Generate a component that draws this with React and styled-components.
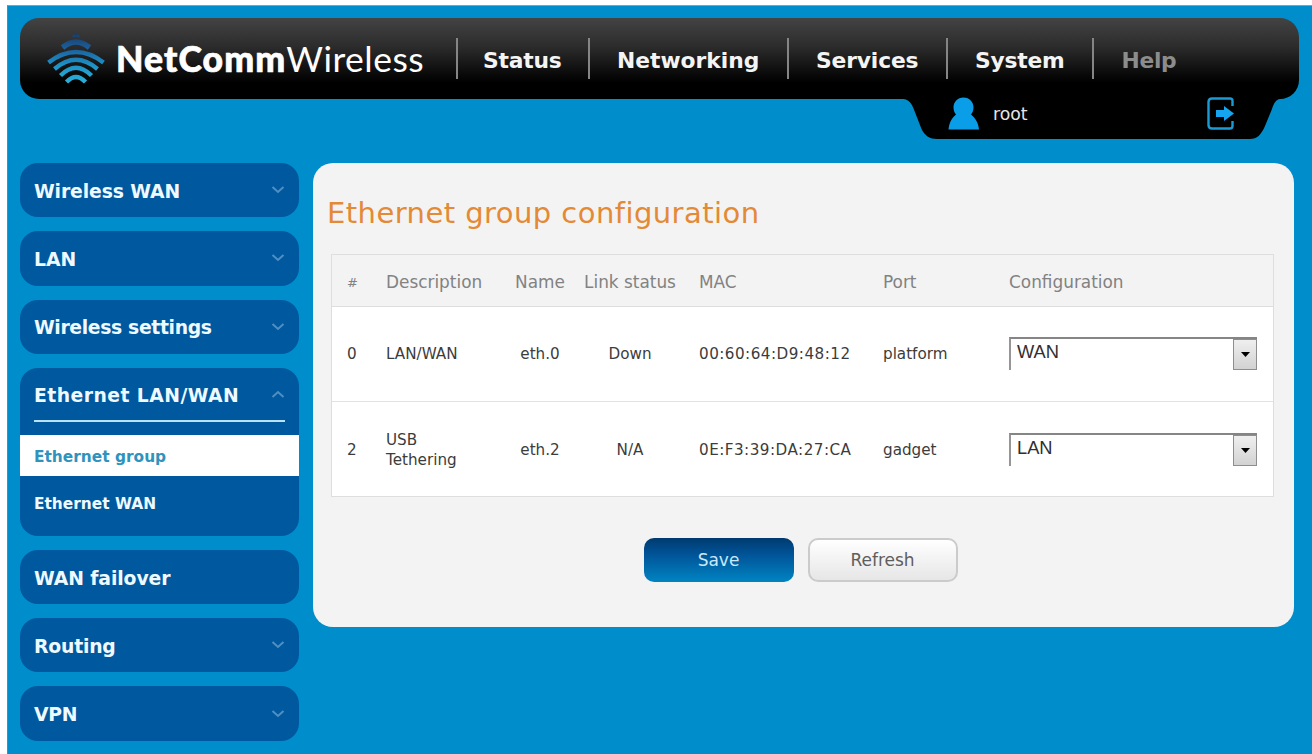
import { useState } from 'react';
import styled, { createGlobalStyle } from 'styled-components';

const navItems = [
   { label: 'Status', width: 132, spacing: -0.2 },
   { label: 'Networking', width: 199, indent: 2 },
   { label: 'Services', width: 159, indent: 2, spacing: -0.15 },
   { label: 'System', width: 146, indent: 2, spacing: -0.2 },
   { label: 'Help', width: 120, indent: 2.5, spacing: -0.3, dim: true },
];

const menuItems = [
   { label: 'Wireless WAN', spacing: -0.1 },
   { label: 'LAN' },
   { label: 'Wireless settings', spacing: -0.35 },
   {
      label: 'Ethernet LAN/WAN',
      spacing: 0.45,
      children: [
         { label: 'Ethernet group', active: true },
         { label: 'Ethernet WAN' },
      ],
   },
   { label: 'WAN failover', leaf: true, spacing: -0.1 },
   { label: 'Routing', spacing: -0.2 },
   { label: 'VPN', spacing: -0.3 },
];

const interfaces = [
   { id: 0, description: 'LAN/WAN', name: 'eth.0', link: 'Down', mac: '00:60:64:D9:48:12', port: 'platform', config: 'WAN' },
   { id: 2, description: 'USB Tethering', name: 'eth.2', link: 'N/A', mac: '0E:F3:39:DA:27:CA', port: 'gadget', config: 'LAN' },
];

////////////////////////////////////////////////////
//////////////////// COMPONENTS ////////////////////
////////////////////////////////////////////////////
export default function App() {
   return (
      <>
         <GlobalStyle />
         <Page>
            <Header />
            <Body>
               <SideMenu />
               <EthernetPanel />
            </Body>
         </Page>
      </>
   );
}

function Header() {
   return (
      <HeaderWrapper>
         <Bar>
            <Logo />
            <Brand><b>NetComm</b><span>Wireless</span></Brand>
            <Nav>
               {navItems.map((n) =>
                  <NavItem key={n.label} $width={n.width} $indent={n.indent} $spacing={n.spacing} $dim={n.dim}>{n.label}</NavItem>
               )}
            </Nav>
         </Bar>
         <UserTab>
            <svg width="34" height="41" viewBox="0 0 34 41">
               <path d="M0 0H34V41C27 41 22 38 18.500 31L11.500 13C8.500 5 6 1.500 0 1Z" fill="#000" />
            </svg>
            <UserInfo>
               <svg width="32" height="33" viewBox="0 0 32 33">
                  <path d="M15.500 0.500C21.500 0.500 25.500 5 25.500 10.500C25.500 13.500 24.500 15.500 23 17.500C27.500 21 30.500 26.500 31 32.500H0.500C1 26.500 3.500 21 8 17.500C6.500 15.500 5.500 13.500 5.500 10.500C5.500 5 9.500 0.500 15.500 0.500Z" fill="#0a9de8" />
               </svg>
               <UserName>root</UserName>
               <LogoutIcon />
            </UserInfo>
            <svg width="36" height="41" viewBox="0 0 36 41">
               <path d="M0 0H36L30 1C26 1.500 24 5 22 11L15 28C11 37 7 41 0 41Z" fill="#000" />
            </svg>
         </UserTab>
      </HeaderWrapper>
   );
}

function Logo() {
   return (
      <svg width="58" height="52" viewBox="0 0 58 52">
         <defs>
            <linearGradient id="waves" x1="0" y1="0" x2="0" y2="52" gradientUnits="userSpaceOnUse">
               <stop offset="0" stopColor="#1b3a63" />
               <stop offset="0.3" stopColor="#1a5f9c" />
               <stop offset="0.6" stopColor="#1d90c4" />
               <stop offset="1" stopColor="#2cb4dc" />
            </linearGradient>
         </defs>
         <g fill="none" stroke="url(#waves)" strokeWidth="4.400">
            <path d="M25.500 3.500Q29 1 32.500 3.500" strokeWidth="3" />
            <path d="M15.500 14.500Q29 3.500 42.500 14.500" strokeWidth="5.500" />
            <path d="M1.500 29.500Q29 8.500 56.500 29.500" />
            <path d="M7.500 36Q29 17.500 50.500 36" />
            <path d="M13.500 42.500Q29 27 44.500 42.500" />
            <path d="M19.500 49Q29 39 38.500 49" />
         </g>
      </svg>
   );
}

function LogoutIcon() {
   return (
      <svg width="28" height="33" viewBox="0 0 28 33">
         <path d="M25.500 9V4Q25.500 1.500 23 1.500H5Q1.500 1.500 1.500 5V28Q1.500 31.500 5 31.500H23Q25.500 31.500 25.500 29V24" fill="none" stroke="#1a9bd6" strokeWidth="2.400" />
         <path d="M9 13H17V9L27 16.500L17 24V20H9Z" fill="#14a4f0" />
      </svg>
   );
}

function Chevron({ up }) {
   return (
      <svg width="14" height="8" viewBox="0 0 14 8">
         <path d={up ? 'M1.500 7L7 2L12.500 7' : 'M1.500 1L7 6L12.500 1'} fill="none" stroke="#4f8fc2" strokeWidth="2" />
      </svg>
   );
}

function SideMenu() {
   return (
      <Menu>
         {menuItems.map((m) =>
            <MenuGroup key={m.label}>
               <MenuTitle $open={!!m.children} $spacing={m.spacing}>
                  <span>{m.label}</span>
                  {!m.leaf && <Chevron up={!!m.children} />}
               </MenuTitle>
               {m.children && m.children.map((c) =>
                  <SubItem key={c.label} $active={c.active}>{c.label}</SubItem>
               )}
            </MenuGroup>
         )}
      </Menu>
   );
}

function EthernetPanel() {
   const [rows] = useState(interfaces);

   return (
      <Panel>
         <Title>Ethernet group configuration</Title>
         <Table>
            <HeadRow>
               <Cell><Hash>#</Hash></Cell>
               <Cell>Description</Cell>
               <Cell $center>Name</Cell>
               <Cell $center>Link status</Cell>
               <Cell>MAC</Cell>
               <Cell>Port</Cell>
               <Cell>Configuration</Cell>
            </HeadRow>
            {rows.map((r) =>
               <Row key={r.id}>
                  <Cell>{r.id}</Cell>
                  <Cell><Description>{r.description}</Description></Cell>
                  <Cell $center>{r.name}</Cell>
                  <Cell $center>{r.link}</Cell>
                  <MacCell>{r.mac}</MacCell>
                  <Cell>{r.port}</Cell>
                  <Cell>
                     <Select>
                        <SelectValue>{r.config}</SelectValue>
                        <SelectArrow>
                           <svg width="9" height="5" viewBox="0 0 9 5"><path d="M0 0H9L4.500 5Z" fill="#000" /></svg>
                        </SelectArrow>
                     </Select>
                  </Cell>
               </Row>
            )}
         </Table>
         <Actions>
            <SaveButton>Save</SaveButton>
            <RefreshButton>Refresh</RefreshButton>
         </Actions>
      </Panel>
   );
}

////////////////////////////////////////////////////
//////////////// STYLED COMPONENTS /////////////////
////////////////////////////////////////////////////
const GlobalStyle = createGlobalStyle`
   * {
      box-sizing: border-box;
   }
   body {
      margin: 0;
      padding: 5px 0 0 7px;
      height: 754px;
      overflow: hidden;
      background: #fff;
      font-family: 'DejaVu Sans', Verdana, sans-serif;
   }
   svg {
      display: block;
      flex: none;
   }
`;
const Page = styled.div`
   height: 749px;
   padding: 12px 18px 0 12px;
   border-top: 1px solid #4fb5cf;
   border-left: 1px solid #2a9cb4;
   background: #008dcb;
   overflow: hidden;
`;
const HeaderWrapper = styled.header`
   height: 121px;
   display: flex;
   flex-direction: column;
`;
const Bar = styled.div`
   height: 81px;
   width: 1279px;
   flex: none;
   padding-left: 27px;
   border-radius: 19px;
   background: linear-gradient(#434343 0%, #2c2c2c 35%, #0b0b0b 68%, #000 80%);
   display: flex;
   align-items: center;
`;
const Brand = styled.div`
   width: 351px;
   padding-left: 11px;
   font-family: Lato, sans-serif;
   font-size: 35.5px;
   line-height: 42px;
   color: #fff;
   white-space: nowrap;
   b {
      font-weight: 900;
      letter-spacing: 1.1px;
      -webkit-text-stroke: .7px #fff;
   }
   span {
      letter-spacing: .5px;
   }
`;
const Nav = styled.nav`
   display: flex;
`;
const NavItem = styled.a`
   width: ${({$width}) => $width}px;
   height: 41px;
   padding-left: ${({$indent}) => 25 + ($indent || 0)}px;
   border-left: 2px solid #858585;
   font-size: 21.8px;
   font-weight: bold;
   line-height: 45px;
   letter-spacing: ${({$spacing}) => $spacing || 0}px;
   color: ${({$dim}) => $dim ? '#8c8c8c' : '#f4f4f4'};
`;
const UserTab = styled.div`
   height: 41px;
   margin: -1px 8px 0 auto;
   display: flex;
`;
const UserInfo = styled.div`
   width: 313px;
   height: 41px;
   padding: 0 15px 10px 11px;
   background: #000;
   display: flex;
   align-items: center;
`;
const UserName = styled.span`
   flex: 1;
   padding: 1px 0 0 13px;
   font-size: 17.3px;
   color: #e6e6e6;
`;
const Body = styled.div`
   margin-top: 24px;
   display: flex;
   align-items: flex-start;
   gap: 14px;
`;
const Menu = styled.aside`
   width: 279px;
   flex: none;
   display: flex;
   flex-direction: column;
   gap: 14px;
`;
const MenuGroup = styled.div`
   border-radius: 18px;
   background: #00589f;
   &:has(a) {
      padding-bottom: 6px;
   }
`;
const MenuTitle = styled.div`
   height: ${({$open}) => $open ? '54px' : '54.3px'};
   margin: ${({$open}) => $open ? '0 14px 13px' : '0 14px'};
   border-bottom: ${({$open}) => $open ? '2px solid #b9e2f5' : 'none'};
   font-size: 18.8px;
   font-weight: bold;
   letter-spacing: ${({$spacing}) => $spacing || 0}px;
   color: #eefaff;
   display: flex;
   align-items: center;
   justify-content: space-between;
   span {
      padding-top: ${({$open}) => $open ? '4px' : '2px'};
   }
`;
const SubItem = styled.a`
   height: 41px;
   padding: 3px 14px 0;
   font-size: 15.4px;
   font-weight: bold;
   color: ${({$active}) => $active ? '#2f93bd' : '#eefaff'};
   background: ${({$active}) => $active ? '#fff' : 'transparent'};
   display: flex;
   align-items: center;
   & + & {
      height: 54px;
      padding-top: 2px;
   }
`;
const Panel = styled.main`
   width: 981px;
   height: 464px;
   padding: 0 20px 0 18px;
   border-radius: 20px;
   background: #f3f3f3;
`;
const Title = styled.h1`
   margin: 29px 0 20px -4px;
   font-size: 29px;
   font-weight: normal;
   line-height: 42px;
   letter-spacing: .45px;
   color: #e48a35;
`;
const Table = styled.div`
   border: 1px solid #dedede;
   background: #fff;
`;
const Row = styled.div`
   height: 95px;
   padding: 2px 0 0 8px;
   font-size: 15.2px;
   color: #3c3c3c;
   display: grid;
   grid-template-columns: 39px 133px 56px 124px 184px 126px 1fr;
   align-items: center;
   & + & {
      border-top: 1px solid #e2e2e2;
   }
`;
const HeadRow = styled(Row)`
   height: 52px;
   padding-top: 3px;
   background: #f3f3f3;
   font-size: 16.9px;
   color: #828282;
   border-bottom: 1px solid #dedede;
   & + ${Row} {
      height: 94px;
      padding-top: 0;
      border-top: none;
   }
`;
const Cell = styled.div`
   padding: 0 7px;
   white-space: nowrap;
   display: flex;
   justify-content: ${({$center}) => $center ? 'center' : 'flex-start'};
`;
const Hash = styled.span`
   font-size: 13px;
`;
const MacCell = styled(Cell)`
   letter-spacing: .47px;
`;
const Description = styled.span`
   width: 90px;
   line-height: 20.5px;
   white-space: normal;
`;
const Select = styled.div`
   width: 248px;
   height: 33px;
   margin-bottom: 2px;
   border-top: 2px solid #858585;
   border-left: 2px solid #969696;
   background: #fff;
   display: flex;
   justify-content: space-between;
`;
const SelectValue = styled.span`
   padding: 2px 0 0 6px;
   font-family: 'Liberation Sans', Arial, sans-serif;
   font-size: 18.3px;
   line-height: 22px;
   color: #303030;
`;
const SelectArrow = styled.span`
   width: 24px;
   height: 31px;
   border: 1px solid #8e8e8e;
   background: linear-gradient(#efefef, #d2d2d2);
   display: flex;
   align-items: center;
   justify-content: center;
`;
const Actions = styled.div`
   margin: 41px 4px 0 0;
   display: flex;
   justify-content: center;
   gap: 14px;
`;
const Button = styled.button`
   width: 150px;
   height: 44px;
   border: none;
   border-radius: 10px;
   padding: 0;
   font-family: inherit;
   font-size: 17px;
`;
const SaveButton = styled(Button)`
   background: linear-gradient(#003a70, #00569a 40%, #0084c2);
   color: #c9e9fa;
`;
const RefreshButton = styled(Button)`
   border: 2px solid #cbcbcb;
   background: linear-gradient(#fff, #e6e6e6);
   color: #5e5e5e;
`;
